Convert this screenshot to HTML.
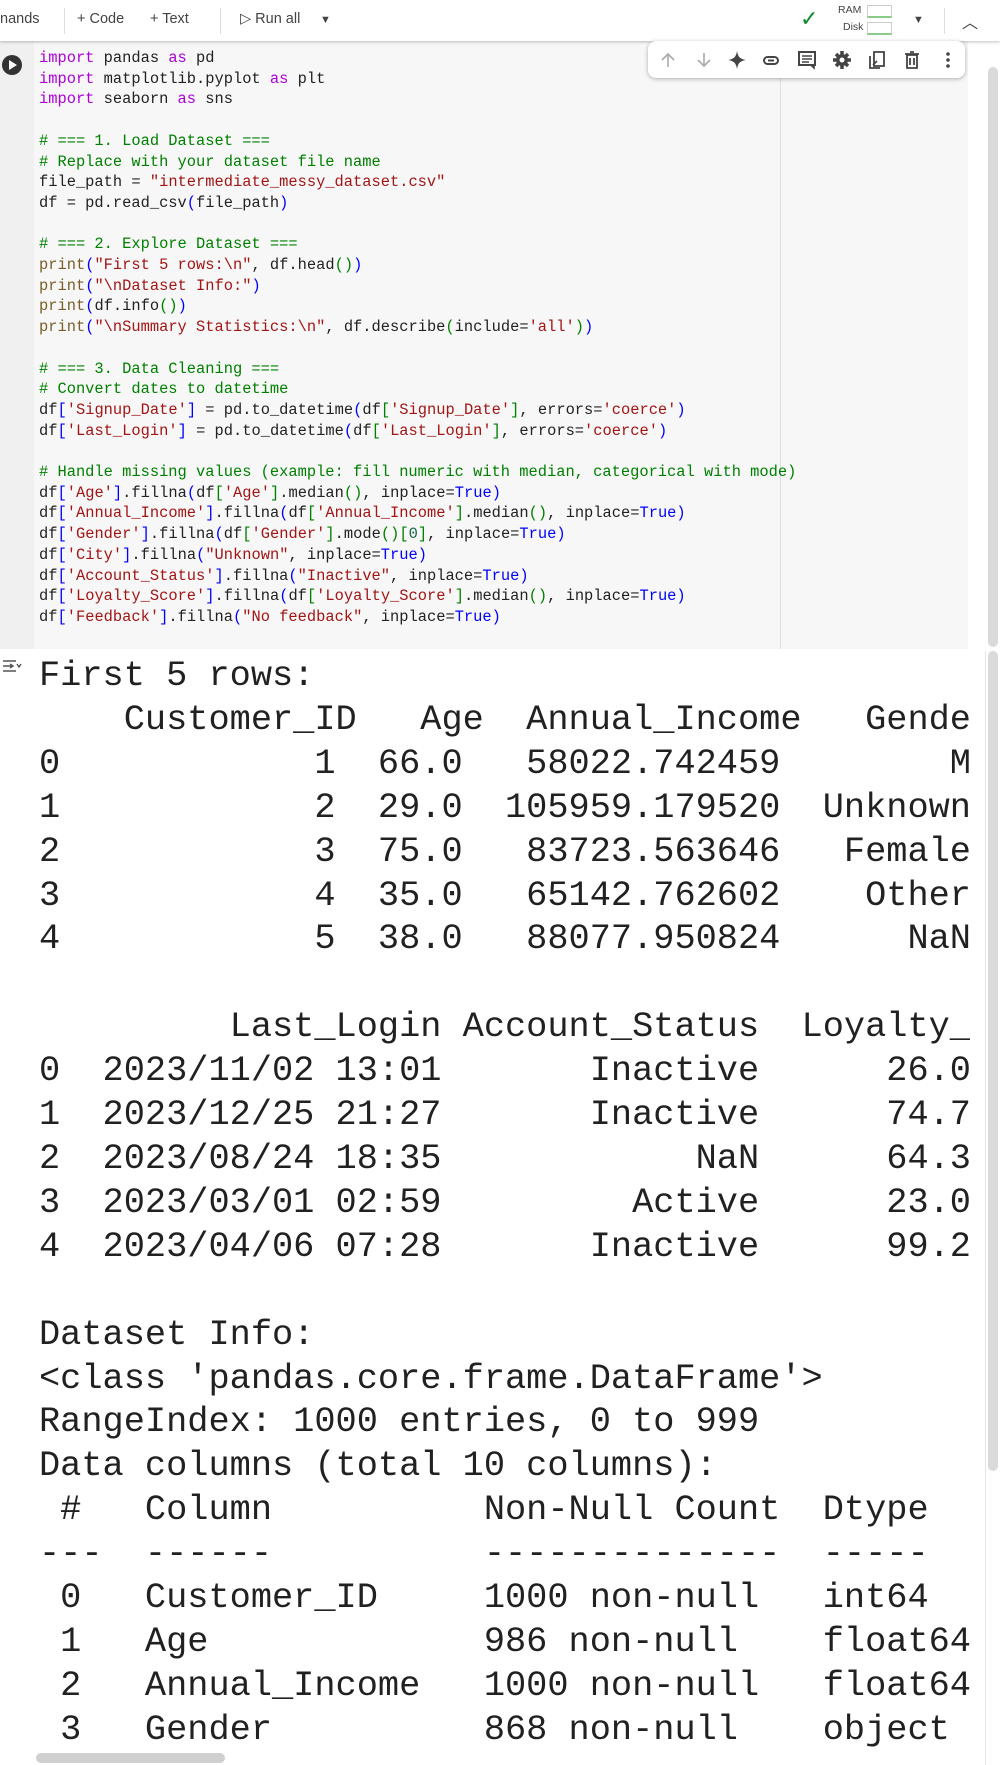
<!DOCTYPE html>
<html><head><meta charset="utf-8"><style>
*{margin:0;padding:0;box-sizing:border-box}
body{width:1000px;height:1765px;overflow:hidden;background:#fff;font-family:"Liberation Sans",sans-serif;position:relative}
.tb{position:absolute;left:0;top:0;width:1000px;height:41px;background:#fff;box-shadow:0 1px 3px rgba(0,0,0,.25);z-index:5;font-size:14.5px;color:#444}
.tb span{position:absolute;top:11px}
.sep{position:absolute;top:8px;width:1px;height:26px;background:#ddd}
.gut{position:absolute;left:0;top:41px;width:34px;height:608px;background:#f0f0f0}
.code{position:absolute;left:34px;top:41px;width:934px;height:608px;background:#f7f7f7}
.vl{position:absolute;left:780px;top:41px;width:1px;height:608px;background:#e0e0e0}
pre{font-family:"Liberation Mono",monospace;white-space:pre;position:absolute}
.c{left:39px;top:48px;font-size:15.4px;line-height:20.7px;color:#222}
.k{color:#af00db}.s{color:#a31515}.g{color:#008000}.b{color:#0000ff}.p{color:#795e26}.n{color:#116644}
.out{left:39px;top:655px;font-size:35.3px;line-height:43.9px;color:#212121;width:931px;overflow:hidden;height:1110px}
.mt{position:absolute;left:648px;top:41px;width:317px;height:37px;background:#fff;border-radius:8px;box-shadow:0 1px 4px rgba(0,0,0,.3);z-index:6}
.mt svg{position:absolute;top:9px}
</style></head><body>
<div class="tb">
<span style="left:0">nands</span>
<div class="sep" style="left:64px"></div>
<span style="left:77px">+ Code</span>
<span style="left:150px">+ Text</span>
<div class="sep" style="left:220px"></div>
<span style="left:240px">▷ Run all</span>
<span style="left:320px;font-size:11px;top:14px">▼</span>
<span style="left:800px;top:6px;color:#0a8a2a;font-size:22px">✓</span>
<span style="left:838px;top:4px;font-size:10.5px">RAM</span>
<span style="left:843px;top:21px;font-size:10.5px">Disk</span>
<div style="position:absolute;left:867px;top:5px;width:25px;height:13px;border:1px solid #ccc;border-bottom:2px solid #8c8"></div>
<div style="position:absolute;left:867px;top:22px;width:25px;height:13px;border:1px solid #ccc;border-bottom:2px solid #8c8"></div>
<span style="left:913px;font-size:11px;top:14px">▼</span>
<div class="sep" style="left:944px"></div>
<span style="left:962px;font-size:16px;top:9px">︿</span>
</div>
<div class="gut"></div>
<div class="code"></div>
<div class="vl"></div>
<svg style="position:absolute;left:1px;top:54px" width="22" height="22"><circle cx="11" cy="11" r="10" fill="#333"/><path d="M8 6 L16 11 L8 16Z" fill="#fff"/></svg>
<div class="mt">
<svg style="left:10px" width="20" height="20"><path d="M10 17V4M4 10l6-6 6 6" stroke="#aaa" stroke-width="1.6" fill="none"/></svg>
<svg style="left:46px" width="20" height="20"><path d="M10 3v13M4 10l6 6 6-6" stroke="#aaa" stroke-width="1.6" fill="none"/></svg>
<svg style="left:79px" width="20" height="20"><path d="M10 1C11 7 13 9 19 10 13 11 11 13 10 19 9 13 7 11 1 10 7 9 9 7 10 1Z" fill="#444"/></svg>
<svg style="left:113px" width="20" height="20"><rect x="3" y="7" width="14" height="7" rx="3.5" stroke="#444" stroke-width="2" fill="none"/><path d="M7 10.5h6" stroke="#444" stroke-width="2"/></svg>
<svg style="left:149px" width="20" height="20"><path d="M2 2h16v13H2z" stroke="#444" stroke-width="2" fill="none"/><path d="M5 6h10M5 9h10M5 12h7M14 15l3 3v-3" stroke="#444" stroke-width="1.6" fill="none"/></svg>
<svg style="left:184px" width="20" height="20"><circle cx="10" cy="10" r="6" fill="#444"/><path d="M10 1v18M1 10h18M4 4l12 12M16 4L4 16" stroke="#444" stroke-width="3.5"/><circle cx="10" cy="10" r="2.5" fill="#fff"/></svg>
<svg style="left:219px" width="20" height="20"><path d="M7 2h10v14H7zM3 6v12h10" stroke="#444" stroke-width="1.8" fill="none"/><path d="M6 15l4-4" stroke="#444" stroke-width="1.6"/></svg>
<svg style="left:254px" width="20" height="20"><path d="M5 5h10v13H5zM3 4h14M8 2h4M8 8v7M12 8v7" stroke="#444" stroke-width="1.8" fill="none"/></svg>
<svg style="left:290px" width="20" height="20"><circle cx="10" cy="4" r="1.8" fill="#444"/><circle cx="10" cy="10" r="1.8" fill="#444"/><circle cx="10" cy="16" r="1.8" fill="#444"/></svg>
</div>
<div style="position:absolute;left:988px;top:67px;width:10px;height:580px;background:#dadada;border-radius:5px"></div>
<pre class="c"><span class="k">import</span> pandas <span class="k">as</span> pd
<span class="k">import</span> matplotlib.pyplot <span class="k">as</span> plt
<span class="k">import</span> seaborn <span class="k">as</span> sns

<span class="g"># === 1. Load Dataset ===</span>
<span class="g"># Replace with your dataset file name</span>
file_path = <span class="s">"intermediate_messy_dataset.csv"</span>
df = pd.read_csv<span class="b">(</span>file_path<span class="b">)</span>

<span class="g"># === 2. Explore Dataset ===</span>
<span class="p">print</span><span class="b">(</span><span class="s">"First 5 rows:\n"</span>, df.head<span class="g">()</span><span class="b">)</span>
<span class="p">print</span><span class="b">(</span><span class="s">"\nDataset Info:"</span><span class="b">)</span>
<span class="p">print</span><span class="b">(</span>df.info<span class="g">()</span><span class="b">)</span>
<span class="p">print</span><span class="b">(</span><span class="s">"\nSummary Statistics:\n"</span>, df.describe<span class="g">(</span>include=<span class="s">'all'</span><span class="g">)</span><span class="b">)</span>

<span class="g"># === 3. Data Cleaning ===</span>
<span class="g"># Convert dates to datetime</span>
df<span class="b">[</span><span class="s">'Signup_Date'</span><span class="b">]</span> = pd.to_datetime<span class="b">(</span>df<span class="g">[</span><span class="s">'Signup_Date'</span><span class="g">]</span>, errors=<span class="s">'coerce'</span><span class="b">)</span>
df<span class="b">[</span><span class="s">'Last_Login'</span><span class="b">]</span> = pd.to_datetime<span class="b">(</span>df<span class="g">[</span><span class="s">'Last_Login'</span><span class="g">]</span>, errors=<span class="s">'coerce'</span><span class="b">)</span>

<span class="g"># Handle missing values (example: fill numeric with median, categorical with mode)</span>
df<span class="b">[</span><span class="s">'Age'</span><span class="b">]</span>.fillna<span class="b">(</span>df<span class="g">[</span><span class="s">'Age'</span><span class="g">]</span>.median<span class="g">()</span>, inplace=<span class="b">True)</span>
df<span class="b">[</span><span class="s">'Annual_Income'</span><span class="b">]</span>.fillna<span class="b">(</span>df<span class="g">[</span><span class="s">'Annual_Income'</span><span class="g">]</span>.median<span class="g">()</span>, inplace=<span class="b">True)</span>
df<span class="b">[</span><span class="s">'Gender'</span><span class="b">]</span>.fillna<span class="b">(</span>df<span class="g">[</span><span class="s">'Gender'</span><span class="g">]</span>.mode<span class="g">()[</span><span class="n">0</span><span class="g">]</span>, inplace=<span class="b">True)</span>
df<span class="b">[</span><span class="s">'City'</span><span class="b">]</span>.fillna<span class="b">(</span><span class="s">"Unknown"</span>, inplace=<span class="b">True)</span>
df<span class="b">[</span><span class="s">'Account_Status'</span><span class="b">]</span>.fillna<span class="b">(</span><span class="s">"Inactive"</span>, inplace=<span class="b">True)</span>
df<span class="b">[</span><span class="s">'Loyalty_Score'</span><span class="b">]</span>.fillna<span class="b">(</span>df<span class="g">[</span><span class="s">'Loyalty_Score'</span><span class="g">]</span>.median<span class="g">()</span>, inplace=<span class="b">True)</span>
df<span class="b">[</span><span class="s">'Feedback'</span><span class="b">]</span>.fillna<span class="b">(</span><span class="s">"No feedback"</span>, inplace=<span class="b">True)</span></pre>
<svg style="position:absolute;left:2px;top:658px" width="20" height="16"><path d="M1 3h13M1 8h9M1 13h13M8 6l3 2-3 2M15 6l2 3 2-3" stroke="#555" stroke-width="1.4" fill="none"/></svg>
<pre class="out">First 5 rows:
    Customer_ID   Age  Annual_Income   Gender
0            1  66.0   58022.742459        M
1            2  29.0  105959.179520  Unknown
2            3  75.0   83723.563646   Female
3            4  35.0   65142.762602    Other
4            5  38.0   88077.950824      NaN

         Last_Login Account_Status  Loyalty_Score
0  2023/11/02 13:01       Inactive      26.0
1  2023/12/25 21:27       Inactive      74.7
2  2023/08/24 18:35            NaN      64.3
3  2023/03/01 02:59         Active      23.0
4  2023/04/06 07:28       Inactive      99.2

Dataset Info:
&lt;class 'pandas.core.frame.DataFrame'&gt;
RangeIndex: 1000 entries, 0 to 999
Data columns (total 10 columns):
 #   Column          Non-Null Count  Dtype  
---  ------          --------------  -----  
 0   Customer_ID     1000 non-null   int64  
 1   Age             986 non-null    float64
 2   Annual_Income   1000 non-null   float64
 3   Gender          868 non-null    object </pre>
<div style="position:absolute;left:988px;top:651px;width:10px;height:820px;background:#dadada;border-radius:5px"></div>
<div style="position:absolute;left:985px;top:651px;width:1px;height:1114px;background:#e4e4e4"></div>
<div style="position:absolute;left:36px;top:1753px;width:189px;height:10px;background:#d0d0d0;border-radius:5px"></div>
</body></html>
